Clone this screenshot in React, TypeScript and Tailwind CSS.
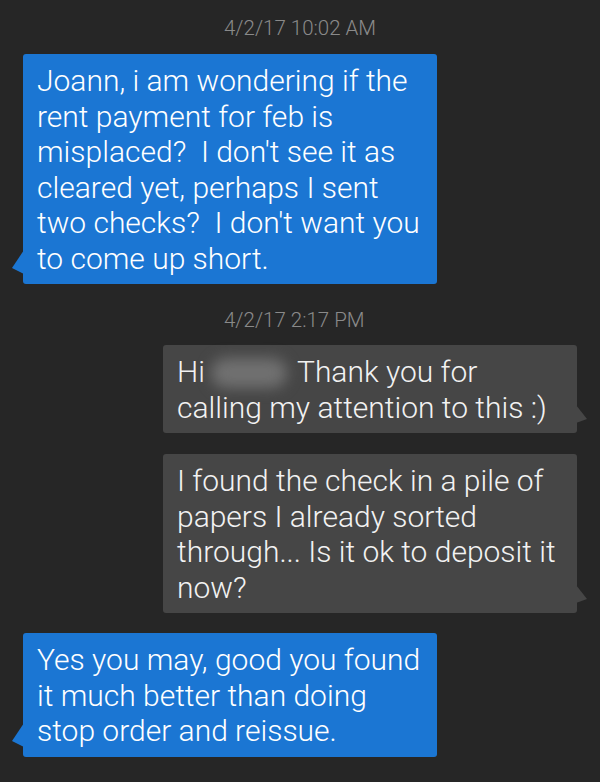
import React from 'react';

type Side = 'in' | 'out';

interface BubbleProps {
  side: Side;
  lines: React.ReactNode[];
  className?: string;
}

function Tail({ side }: { side: Side }) {
  if (side === 'out') {
    return (
      <svg
        className="absolute left-[-11px] bottom-[10px]"
        width="12"
        height="24"
        viewBox="0 0 12 24"
      >
        <polygon points="12,0 0,18 12,24" fill="#1b76d3" />
      </svg>
    );
  }
  return (
    <svg
      className="absolute right-[-11px] bottom-[10px]"
      width="12"
      height="18"
      viewBox="0 0 12 18"
    >
      <polygon points="0,0 11,14 0,18" fill="#464646" />
    </svg>
  );
}

function Bubble({ side, lines, className = '' }: BubbleProps) {
  const tone =
    side === 'out' ? 'bg-[#1b76d3] text-white ml-[23px]' : 'bg-[#464646] text-[#f2f2f2] ml-[163px]';
  return (
    <div
      className={`relative w-[414px] rounded-[3px] pl-[14px] pr-[6px] pt-[9px] pb-[8px] text-[30px] leading-[35.5px] font-light ${tone} ${className}`}
    >
      {lines.map((line, i) => (
        <div key={i} className="whitespace-pre">
          {line}
        </div>
      ))}
      <Tail side={side} />
    </div>
  );
}

function Stamp({ text, className = '' }: { text: string; className?: string }) {
  return (
    <div className={`pl-[224px] text-[20.5px] leading-[24px] font-light text-[#8a8a8a] ${className}`}>
      {text}
    </div>
  );
}

export default function App() {
  return (
    <div
      className="w-[600px] h-[782px] bg-[#262626] overflow-hidden flex flex-col"
      style={{ fontFamily: '"Roboto Light", Roboto, "Noto Sans", sans-serif' }}
    >
      <Stamp text="4/2/17 10:02 AM" className="mt-[16px]" />
      <Bubble
        side="out"
        className="mt-[14px]"
        lines={[
          'Joann, i am wondering if the',
          'rent payment for feb is',
          "misplaced?  I don't see it as",
          'cleared yet, perhaps I sent',
          "two checks?  I don't want you",
          'to come up short.',
        ]}
      />
      <Stamp text="4/2/17 2:17 PM" className="mt-[24px]" />
      <Bubble
        side="in"
        className="mt-[13px]"
        lines={[
          <>
            Hi
            <span className="inline-block relative w-[92px] h-[28px] align-middle">
              <span className="absolute left-[6px] top-[-2px] w-[76px] h-[30px] rounded-full bg-[#707070] blur-[7px]" />
            </span>
            Thank you for
          </>,
          'calling my attention to this :)',
        ]}
      />
      <Bubble
        side="in"
        className="mt-[21px]"
        lines={[
          'I found the check in a pile of',
          'papers I already sorted',
          'through... Is it ok to deposit it',
          'now?',
        ]}
      />
      <Bubble
        side="out"
        className="mt-[20px]"
        lines={[
          'Yes you may, good you found',
          'it much better than doing',
          'stop order and reissue.',
        ]}
      />
    </div>
  );
}
